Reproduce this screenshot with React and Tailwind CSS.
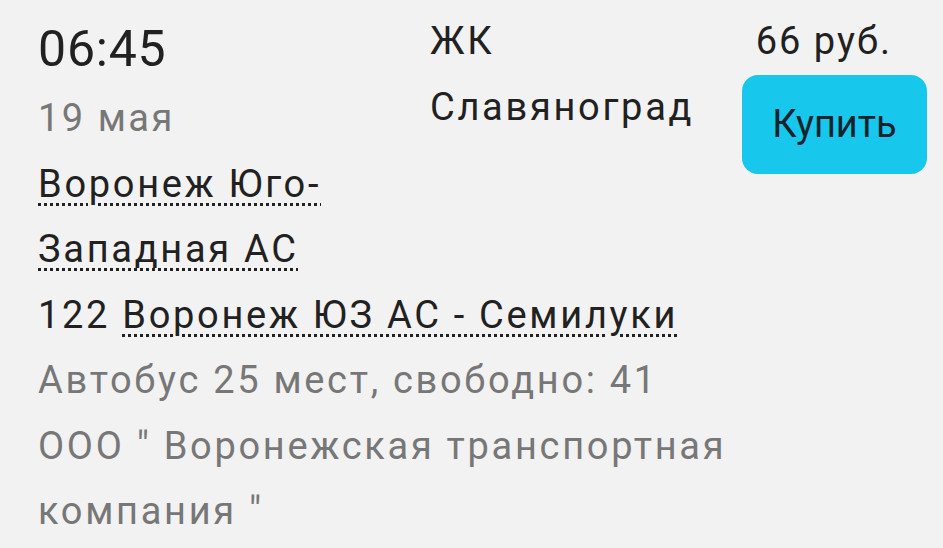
export default function App() {
  const font = { fontFamily: 'Roboto, "Noto Sans", sans-serif' };
  const ul = "underline decoration-dotted decoration-[3px] underline-offset-[6px] decoration-[#222]";
  return (
    <div className="w-[943px] h-[548px] bg-[#f2f2f2] overflow-hidden text-[#212121]" style={font}>
      <div className="flex pl-[38px] pr-[16px] pt-[9px]">
        <div className="w-[392px] shrink-0">
          <div className="text-[50px] leading-[74px] mt-[3px] tracking-[0.8px]">06:45</div>
          <div className="text-[38px] leading-[65.5px] tracking-[2.5px] text-[#777]">19 мая</div>
          <div className="text-[38px] leading-[65.5px] tracking-[2.7px] w-[360px]">
            <span className={ul}>Воронеж Юго-Западная АС</span>
          </div>
        </div>
        <div className="flex-1 text-[38px] leading-[65.5px] tracking-[2.7px] pr-[20px]">ЖК Славяноград</div>
        <div className="w-[185px] shrink-0 flex flex-col items-end">
          <div className="text-[38px] leading-[65.5px] tracking-[2px] mr-[35px]">66 руб.</div>
          <button className="w-[185px] h-[99px] rounded-[16px] bg-[#17c7ec] text-[38px] leading-none text-[#13232b]">
            Купить
          </button>
        </div>
      </div>
      <div className="pl-[38px] w-[770px] text-[38px] leading-[65.5px] tracking-[2.7px]">
        <div>
          122 <span className={ul}>Воронеж ЮЗ АС - Семилуки</span>
        </div>
        <div className="text-[#777]">Автобус 25 мест, свободно: 41</div>
        <div className="text-[#777]">ООО " Воронежская транспортная компания "</div>
      </div>
    </div>
  );
}
